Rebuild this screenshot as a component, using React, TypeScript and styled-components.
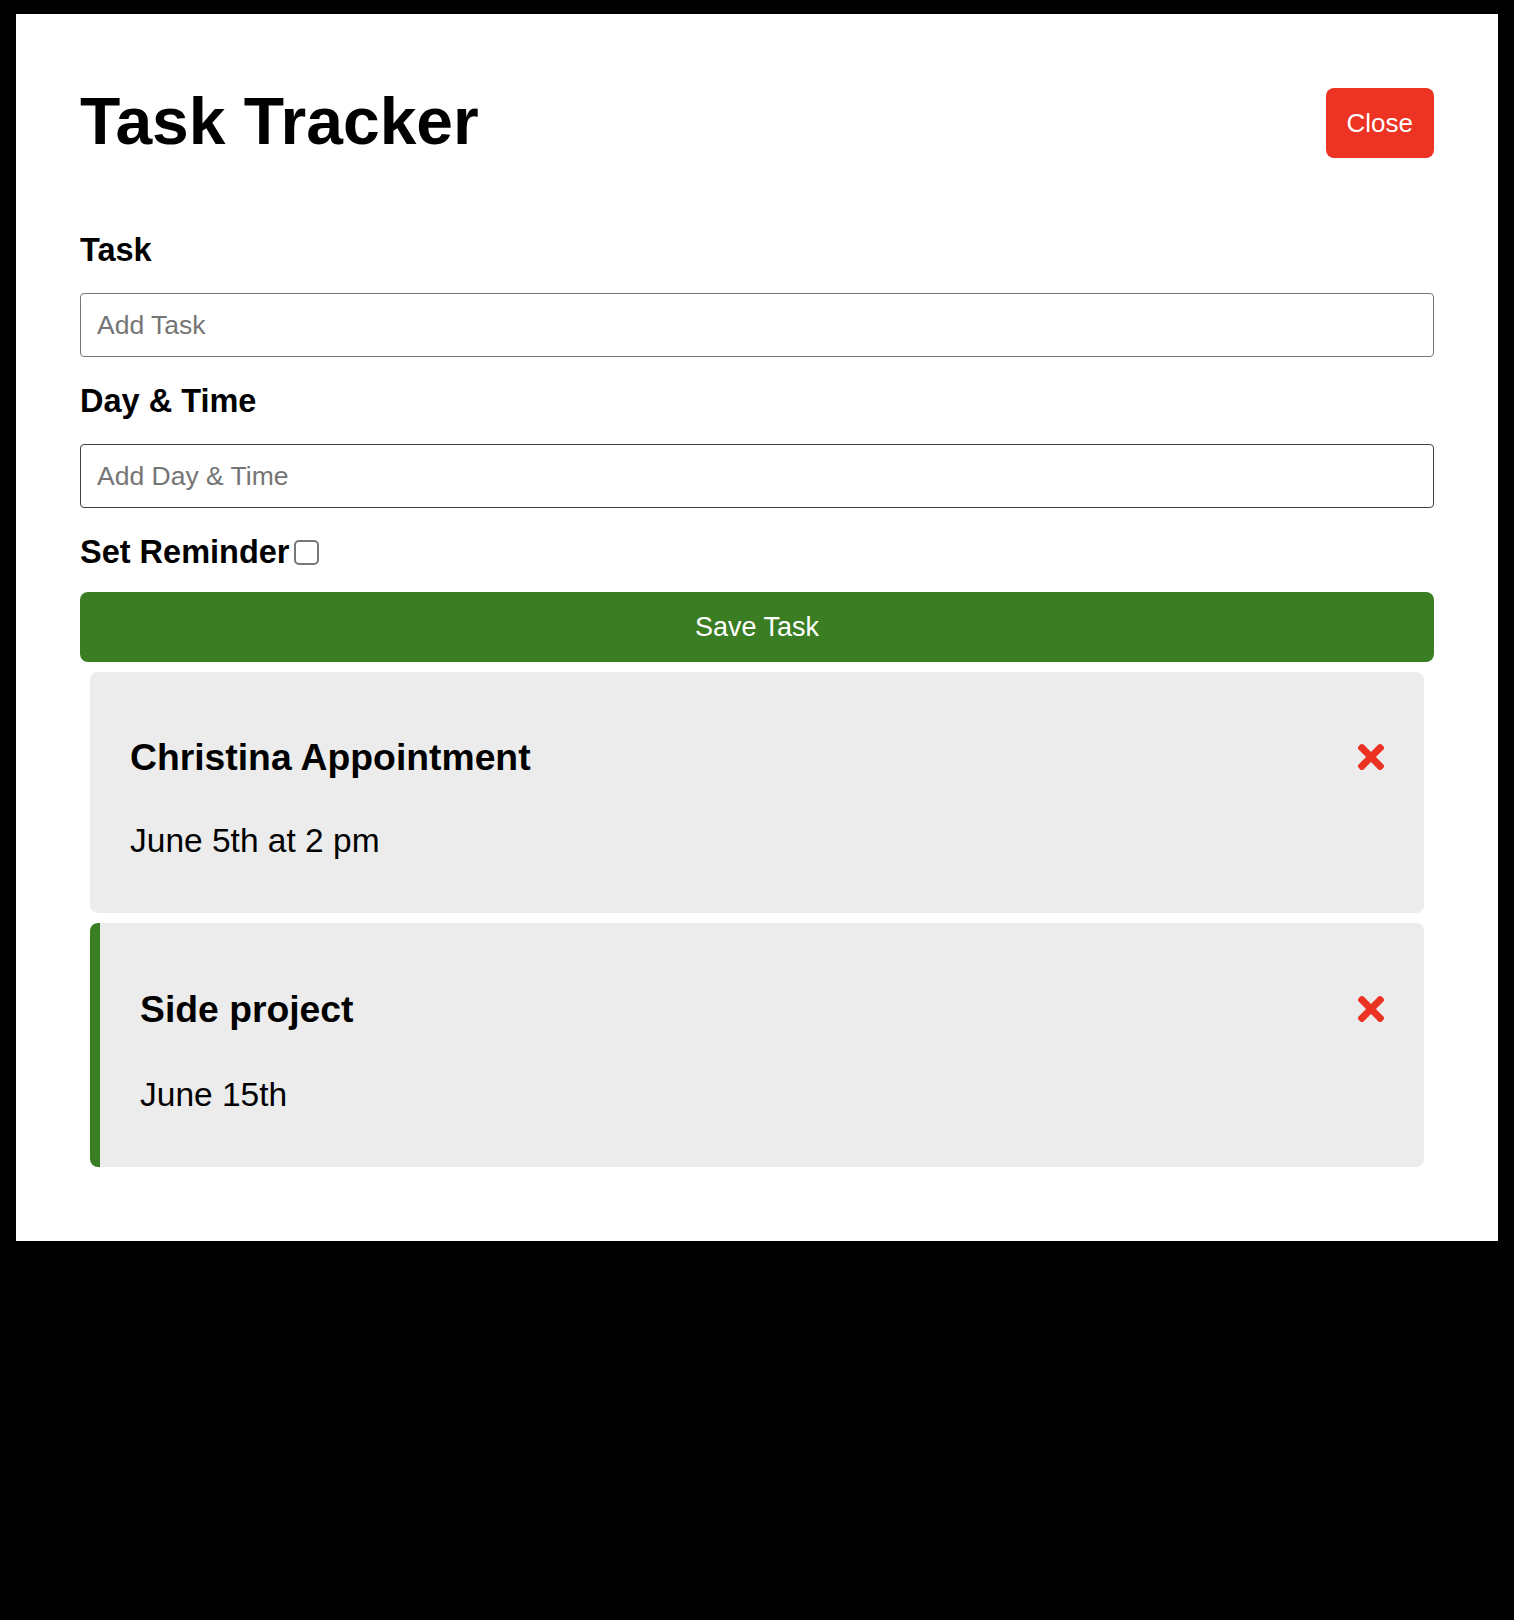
import React, { useState } from 'react';
import styled, { createGlobalStyle } from 'styled-components';
import { FaTimes } from 'react-icons/fa';

const GlobalStyle = createGlobalStyle`
  * {
    box-sizing: border-box;
  }
  body {
    margin: 0;
    background: #000;
    font-family: "Liberation Sans", Arial, sans-serif;
  }
`;

const tasks = [
  { id: 1, text: 'Christina Appointment', day: 'June 5th at 2 pm', reminder: false },
  { id: 2, text: 'Side project', day: 'June 15th', reminder: true },
];

const App = () => {
  const [text, setText] = useState('');
  const [day, setDay] = useState('');
  const [reminder, setReminder] = useState(false);

  return (
    <>
      <GlobalStyle />
      <Container>
        <Header>
          <Title>Task Tracker</Title>
          <CloseButton>Close</CloseButton>
        </Header>

        <Form onSubmit={(e) => e.preventDefault()}>
          <FormControl>
            <Label>Task</Label>
            <Input
              type="text"
              placeholder="Add Task"
              value={text}
              onChange={(e) => setText(e.target.value)}
            />
          </FormControl>
          <FormControl>
            <Label>Day &amp; Time</Label>
            <Input
              $dark
              type="text"
              placeholder="Add Day & Time"
              value={day}
              onChange={(e) => setDay(e.target.value)}
            />
          </FormControl>
          <ReminderRow>
            <Label as="span">Set Reminder</Label>
            <Checkbox
              type="checkbox"
              checked={reminder}
              onChange={(e) => setReminder(e.target.checked)}
            />
          </ReminderRow>
          <SaveButton type="submit">Save Task</SaveButton>
        </Form>

        <TaskList>
          {tasks.map((task) => (
            <Task key={task.id} $reminder={task.reminder}>
              <TaskHead>
                <TaskTitle>{task.text}</TaskTitle>
                <DeleteIcon size={38} />
              </TaskHead>
              <TaskDay>{task.day}</TaskDay>
            </Task>
          ))}
        </TaskList>
      </Container>
    </>
  );
};

export default App;

const Container = styled.div`
  margin: 14px 16px 0;
  padding: 64px;
  background: #fff;
`;

const Header = styled.header`
  display: flex;
  justify-content: space-between;
  align-items: flex-start;
`;

const Title = styled.h1`
  margin: 6px 0 0;
  font-size: 66px;
  line-height: 74px;
  font-weight: 700;
  color: #000;
`;

const CloseButton = styled.button`
  margin-top: 10px;
  padding: 20px 21px;
  border: none;
  border-radius: 8px;
  background: #ec3324;
  color: #fff;
  font-family: inherit;
  font-size: 26px;
  line-height: 30px;
`;

const Form = styled.form`
  margin-top: 74px;
`;

const FormControl = styled.div`
  margin-bottom: 26px;
`;

const Label = styled.label`
  display: block;
  margin-bottom: 24px;
  font-size: 32.5px;
  line-height: 37px;
  font-weight: 700;
  color: #000;
`;

const Input = styled.input<{ $dark?: boolean }>`
  display: block;
  width: 100%;
  height: 64px;
  padding: 0 16px;
  border: 1px solid ${(p) => (p.$dark ? '#3f3f3f' : '#767676')};
  border-radius: 4px;
  font-family: inherit;
  font-size: 26.5px;
  color: #000;
  outline: none;

  &::placeholder {
    color: #757575;
  }
`;

const ReminderRow = styled.div`
  display: flex;
  align-items: center;
  gap: 4px;

  & > span {
    margin-bottom: 0;
  }
`;

const Checkbox = styled.input`
  appearance: none;
  margin: 0;
  width: 25px;
  height: 25px;
  border: 2px solid #777;
  border-radius: 5px;
  background: #fff;
`;

const SaveButton = styled.button`
  display: block;
  width: 100%;
  height: 70px;
  margin-top: 21px;
  border: none;
  border-radius: 8px;
  background: #3a7d22;
  color: #fff;
  font-family: inherit;
  font-size: 27px;
`;

const TaskList = styled.div`
  display: flex;
  flex-direction: column;
  gap: 10px;
  padding: 10px;
`;

const Task = styled.div<{ $reminder?: boolean }>`
  display: flex;
  flex-direction: column;
  gap: ${(p) => (p.$reminder ? '46px' : '44px')};
  padding: ${(p) => (p.$reminder ? '65px' : '64px')} 40px 53px;
  border-left: ${(p) => (p.$reminder ? '10px solid #3a7d22' : 'none')};
  border-radius: 8px;
  background: #ececec;
`;

const TaskHead = styled.div`
  display: flex;
  justify-content: space-between;
  align-items: center;
`;

const TaskTitle = styled.h3`
  margin: 0;
  font-size: 37.3px;
  line-height: 42px;
  font-weight: 700;
  color: #000;
`;

const DeleteIcon = styled(FaTimes)`
  margin-right: -6px;
  color: #ea3323;
  cursor: pointer;
`;

const TaskDay = styled.p`
  margin: 0;
  font-size: 33.5px;
  line-height: 38px;
  color: #000;
`;
